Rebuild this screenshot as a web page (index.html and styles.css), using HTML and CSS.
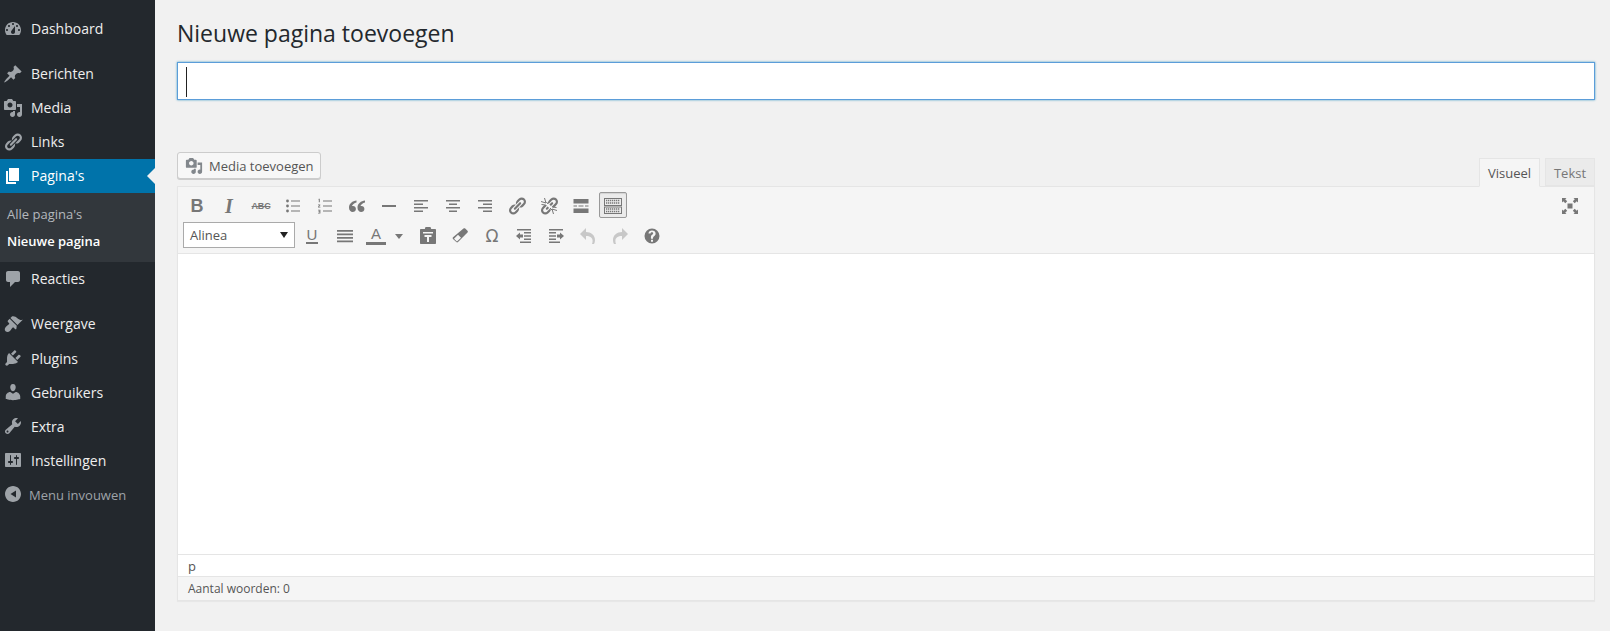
FILE: index.html
```html
<!DOCTYPE html>
<html lang="nl">
<head>
<meta charset="utf-8">
<title>Nieuwe pagina toevoegen</title>
<link rel="stylesheet" href="styles.css">
</head>
<body>
<svg class="defs" width="0" height="0" aria-hidden="true">
  <symbol id="i-dash" viewBox="0 0 20 20"><path fill-rule="evenodd" d="M3.76 16h12.48c1.1-1.37 1.76-3.11 1.76-5 0-4.42-3.58-8-8-8s-8 3.58-8 8c0 1.89.66 3.63 1.76 5zM10 4c.55 0 1 .45 1 1s-.45 1-1 1-1-.45-1-1 .45-1 1-1zM6 6c.55 0 1 .45 1 1s-.45 1-1 1-1-.45-1-1 .45-1 1-1zm8 0c.55 0 1 .45 1 1s-.45 1-1 1-1-.45-1-1 .45-1 1-1zm-5.37 5.55L12 7v6c0 1.1-.9 2-2 2s-2-.9-2-2c0-.57.24-1.08.63-1.45zM4 10c.55 0 1 .45 1 1s-.45 1-1 1-1-.45-1-1 .45-1 1-1zm12 0c.55 0 1 .45 1 1s-.45 1-1 1-1-.45-1-1 .45-1 1-1z"/></symbol>
  <symbol id="i-pin" viewBox="0 0 20 20"><path d="M10.44 3.02l1.82-1.82 6.36 6.35-1.83 1.82c-1.05-.68-2.48-.57-3.41.36l-.75.75c-.92.93-1.04 2.35-.35 3.41l-1.83 1.82-2.41-2.41-2.8 2.79c-.42.42-3.38 2.71-3.8 2.29s1.86-3.39 2.28-3.81l2.79-2.79L4.1 9.36l1.83-1.82c1.05.69 2.48.57 3.4-.36l.75-.75c.93-.92 1.05-2.35.36-3.41z"/></symbol>
  <symbol id="i-media" viewBox="0 0 20 20"><path fill-rule="evenodd" d="M13 11V4c0-.55-.45-1-1-1h-1.67L9 1H5L3.67 3H2c-.55 0-1 .45-1 1v7c0 .55.45 1 1 1h10c.55 0 1-.45 1-1zM7 4.5c1.38 0 2.5 1.12 2.5 2.5S8.38 9.5 7 9.5 4.5 8.38 4.5 7 5.62 4.5 7 4.5zM14 6h5v10.5c0 1.38-1.12 2.5-2.5 2.5S14 17.88 14 16.5s1.12-2.5 2.5-2.5c.17 0 .34.02.5.05V9h-3V6zm-4 8.05V13h2v3.5c0 1.38-1.12 2.5-2.5 2.5S7 17.88 7 16.5 8.12 14 9.5 14c.17 0 .34.02.5.05z"/></symbol>
  <symbol id="i-link" viewBox="0 0 20 20"><path d="M17.74 2.76c1.68 1.69 1.68 4.41 0 6.1l-1.53 1.52c-1.12 1.12-2.7 1.47-4.14 1.09l2.62-2.61.76-.77.76-.76c.84-.84.84-2.2 0-3.04-.84-.85-2.2-.85-3.04 0l-.77.76-3.38 3.38c-.37-1.44-.02-3.02 1.1-4.14l1.52-1.53c1.69-1.68 4.42-1.68 6.1 0zM8.59 13.43l5.34-5.34c.42-.42.42-1.1 0-1.52-.44-.43-1.13-.39-1.53 0l-5.33 5.34c-.42.42-.42 1.1 0 1.52.44.43 1.13.39 1.52 0zm-.76 2.29l4.14-4.15c.38 1.44.03 3.02-1.09 4.14l-1.52 1.53c-1.69 1.68-4.41 1.68-6.1 0-1.68-1.68-1.68-4.42 0-6.1l1.53-1.52c1.12-1.12 2.7-1.47 4.14-1.1l-4.14 4.15c-.85.84-.85 2.2 0 3.05.84.84 2.2.84 3.04 0z"/></symbol>
  <symbol id="i-page" viewBox="0 0 20 20"><path d="M6 15V2h10v13H6zm-1 1h8v2H3V5h2v11z"/></symbol>
  <symbol id="i-comment" viewBox="0 0 20 20"><path d="M5 2h10c1.1 0 2 .9 2 2v7c0 1.1-.9 2-2 2h-3l-5 5v-5H5c-1.1 0-2-.9-2-2V4c0-1.1.9-2 2-2z"/></symbol>
  <symbol id="i-brush" viewBox="0 0 20 20"><path d="M14.48 11.06L7.41 3.99l1.5-1.5c.5-.56 2.3-.47 3.51.32 1.21.8 1.43 1.28 2.91 2.1 1.18.64 2.45 1.26 4.45.85zm-.71.71L6.7 4.7 4.93 6.47c-.39.39-.39 1.02 0 1.41l1.06 1.06c.39.39.39 1.03 0 1.42-.6.6-1.43 1.11-2.21 1.69-.35.26-.7.53-1.01.84-1.04 1.04-1.5 3.1-.22 4.38 1.28 1.28 3.34.82 4.38-.22.31-.31.58-.66.84-1.01.58-.78 1.09-1.61 1.69-2.21.39-.39 1.03-.39 1.42 0l1.06 1.06c.39.39 1.02.39 1.41 0z"/></symbol>
  <symbol id="i-plug" viewBox="0 0 20 20"><path d="M13.11 4.36L9.87 7.6 8 5.73l3.24-3.24c.35-.34 1.05-.2 1.56.32.52.51.66 1.21.31 1.55zm-8 1.77l.91-1.12 9.01 9.01-1.19.84c-.71.71-2.63 1.16-3.82 1.16H6.14L4.9 17.26c-.59.59-1.54.59-2.12 0-.59-.58-.59-1.53 0-2.12l1.24-1.24v-3.88c0-1.13.4-3.19 1.09-3.89zm7.26 3.97l3.24-3.24c.34-.35 1.04-.21 1.55.31.52.51.66 1.21.31 1.55l-3.24 3.25z"/></symbol>
  <symbol id="i-user" viewBox="0 0 20 20"><path d="M10 9.25c-2.27 0-2.73-3.44-2.73-3.44C7 4.02 7.82 2 9.97 2c2.16 0 2.98 2.02 2.71 3.81 0 0-.41 3.44-2.68 3.44zm0 2.57L12.72 10c2.39 0 4.52 2.33 4.52 4.53v2.49s-3.65 1.13-7.24 1.13c-3.65 0-7.24-1.13-7.24-1.13v-2.49c0-2.25 1.94-4.48 4.47-4.48z"/></symbol>
  <symbol id="i-tool" viewBox="0 0 20 20"><path fill-rule="evenodd" d="M16.68 9.77c-1.34 1.34-3.3 1.67-4.95.99l-5.41 6.52c-.99.99-2.59.99-3.58 0s-.99-2.59 0-3.57l6.52-5.42c-.68-1.65-.35-3.61.99-4.95 1.28-1.28 3.12-1.62 4.72-1.06l-2.89 2.89 2.82 2.82 2.86-2.87c.53 1.58.18 3.39-1.08 4.65zM3.81 16.21c.4.39 1.04.39 1.43 0 .4-.4.4-1.04 0-1.43-.39-.4-1.03-.4-1.43 0-.39.39-.39 1.03 0 1.43z"/></symbol>
  <symbol id="i-settings" viewBox="0 0 20 20"><path fill-rule="evenodd" d="M18 16V4c0-.55-.45-1-1-1H3c-.55 0-1 .45-1 1v12c0 .55.45 1 1 1h14c.55 0 1-.45 1-1zM8 11h1c.55 0 1 .45 1 1s-.45 1-1 1H8v1.5c0 .28-.22.5-.5.5s-.5-.22-.5-.5V13H6c-.55 0-1-.45-1-1s.45-1 1-1h1V5.5c0-.28.22-.5.5-.5s.5.22.5.5V11zm5-2h-1c-.55 0-1-.45-1-1s.45-1 1-1h1V5.5c0-.28.22-.5.5-.5s.5.22.5.5V7h1c.55 0 1 .45 1 1s-.45 1-1 1h-1v5.5c0 .28-.22.5-.5.5s-.5-.22-.5-.5V9z"/></symbol>
  <symbol id="i-collapse" viewBox="0 0 20 20"><path fill-rule="evenodd" d="M18 10c0-4.42-3.58-8-8-8s-8 3.58-8 8 3.58 8 8 8 8-3.58 8-8zm-5 -3.5v7L7.5 10z"/></symbol>
</svg>

<div class="layout">
  <nav class="sidebar">
    <ul class="menu">
      <li class="item"><svg class="micon"><use href="#i-dash"/></svg><span>Dashboard</span></li>
      <li class="item sep"><svg class="micon"><use href="#i-pin"/></svg><span>Berichten</span></li>
      <li class="item"><svg class="micon"><use href="#i-media"/></svg><span>Media</span></li>
      <li class="item"><svg class="micon"><use href="#i-link"/></svg><span>Links</span></li>
      <li class="item active"><svg class="micon"><use href="#i-page"/></svg><span>Pagina's</span></li>
      <li class="sub">
        <div class="subitem">Alle pagina's</div>
        <div class="subitem current">Nieuwe pagina</div>
      </li>
      <li class="item"><svg class="micon"><use href="#i-comment"/></svg><span>Reacties</span></li>
      <li class="item sep"><svg class="micon"><use href="#i-brush"/></svg><span>Weergave</span></li>
      <li class="item low"><svg class="micon"><use href="#i-plug"/></svg><span>Plugins</span></li>
      <li class="item low"><svg class="micon"><use href="#i-user"/></svg><span>Gebruikers</span></li>
      <li class="item low"><svg class="micon"><use href="#i-tool"/></svg><span>Extra</span></li>
      <li class="item low"><svg class="micon"><use href="#i-settings"/></svg><span>Instellingen</span></li>
      <li class="item collapse"><svg class="micon"><use href="#i-collapse"/></svg><span>Menu invouwen</span></li>
    </ul>
  </nav>

  <main class="content">
    <h1 class="title">Nieuwe pagina toevoegen</h1>
    <div class="titlefield"><span class="caret"></span></div>

    <div class="editor-head">
      <button class="media-btn"><svg class="btn-icon"><use href="#i-media"/></svg>Media toevoegen</button>
      <div class="tabs">
        <div class="tab on">Visueel</div>
        <div class="tab">Tekst</div>
      </div>
    </div>

    <section class="editor">
      <div class="toolbar">
        <div class="row">
          <div class="tb glyph bold">B</div>
          <div class="tb glyph ital">I</div>
          <div class="tb glyph abc">ABC</div>
          <div class="tb"><svg class="ti" viewBox="0 0 20 20"><path d="M8 4.400h9v1.100H8zM8 9.400h9v1.100H8zM8 14.400h9v1.100H8z"/><circle cx="4.500" cy="5" r="1.400"/><circle cx="4.500" cy="10" r="1.400"/><circle cx="4.500" cy="15" r="1.400"/></svg></div>
          <div class="tb"><svg class="ti" viewBox="0 0 20 20"><path d="M8 4.400h9v1H8zM8 9.500h9v1H8zM8 14.600h9v1H8zM3.800 2.800h1v3.400h-1V3.600h-.6zM3 8.400h2.300v.9L4 10.700h1.400v.8H3v-.8l1.400-1.500H3zM3 13.800h2.400v3.600H3v-.7h1.400v-.8H3.500v-.6h.9v-.8H3z"/></svg></div>
          <div class="tb"><svg class="ti" viewBox="0 0 20 20"><path d="M9.500 4.500C5.600 5 2 7.400 2 11.800 2 14.400 3.700 16 5.700 16c1.700 0 3.200-1.300 3.200-3.100 0-1.700-1.200-3-2.900-3-.5 0-.9.100-1 .1.300-1.500 2.300-3 4.500-3.500zM18 4.500c-3.900.5-7.500 2.900-7.500 7.300 0 2.600 1.700 4.200 3.700 4.200 1.700 0 3.200-1.300 3.200-3.100 0-1.700-1.200-3-2.900-3-.5 0-.9.100-1 .1.300-1.500 2.300-3 4.500-3.500z"/></svg></div>
          <div class="tb"><svg class="ti" viewBox="0 0 20 20"><path d="M3 9h14v2H3z"/></svg></div>
          <div class="tb"><svg class="ti" viewBox="0 0 20 20"><path d="M3 4h14v1.500H3zM3 7.500h9V9H3zM3 11h14v1.500H3zM3 14.500h9V16H3z"/></svg></div>
          <div class="tb"><svg class="ti" viewBox="0 0 20 20"><path d="M3 4h14v1.500H3zM6 7.500h8V9H6zM3 11h14v1.500H3zM6 14.500h8V16H6z"/></svg></div>
          <div class="tb"><svg class="ti" viewBox="0 0 20 20"><path d="M3 4h14v1.500H3zM8 7.500h9V9H8zM3 11h14v1.500H3zM8 14.500h9V16H8z"/></svg></div>
          <div class="tb"><svg class="ti"><use href="#i-link"/></svg></div>
          <div class="tb"><svg class="ti" viewBox="0 0 20 20"><use href="#i-link" width="20" height="20"/><path class="gap" d="M3.500 3.500L16.500 16.500"/><path class="ray" d="M2 5.500L7 7M5.500 2L7 7M7.500 6L9 8M2.500 8.500L6.500 9M11 12L13 14M18 14.500L13 13M14.500 18L13 13M17.500 11.500L13.500 11"/></svg></div>
          <div class="tb"><svg class="ti" viewBox="0 0 20 20"><path d="M2.500 3h15v4.500h-15zM2.500 9.500h3.500v1h-3.500zM7.500 9.500h5v1h-5zM14 9.500h3.500v1H14zM2.500 12.500h15V17h-15z"/></svg></div>
          <div class="tb pressed"><svg class="ti" viewBox="0 0 20 20"><rect class="kb" x="1.500" y="2.500" width="17" height="7"/><rect class="kb" x="1.500" y="11" width="17" height="6.500"/><path class="keys" d="M3 4.500H17M3 7H17M3 13H17M3 15.500H17"/></svg></div>
          <div class="tb full"><svg class="ti" viewBox="0 0 20 20"><path d="M7.500 7.500h5v5h-5zM2 2h4.500L5.200 3.300 7.200 5.300 5.300 7.200 3.300 5.200 2 6.500zM18 2v4.500l-1.300-1.300-2 2-1.900-1.900 2-2L13.500 2zM2 18v-4.500l1.300 1.300 2-2 1.900 1.900-2 2L6.500 18zM18 18h-4.500l1.300-1.300-2-2 1.900-1.900 2 2 1.300-1.300z"/></svg></div>
        </div>
        <div class="row">
          <div class="select"><span>Alinea</span><i class="sel-arrow"></i></div>
          <div class="tb glyph under"><span>U</span></div>
          <div class="tb"><svg class="ti" viewBox="0 0 20 20"><path d="M2 4h16v1.700H2zM2 7.500h16v1.700H2zM2 11h16v1.700H2zM2 14.500h16v1.700H2z"/></svg></div>
          <div class="tb split"><span class="fore">A</span><i class="down"></i></div>
          <div class="tb"><svg class="ti" viewBox="0 0 20 20"><path fill-rule="evenodd" d="M7.500 1h5l.7 2H17c.6 0 1 .4 1 1v13c0 .6-.4 1-1 1H3c-.6 0-1-.4-1-1V4c0-.6.4-1 1-1h3.800zM5 6v1.500h10V6zm1.500 3v2H9v5h2v-5h2.500V9z"/></svg></div>
          <div class="tb"><svg class="ti" viewBox="0 0 20 20"><path fill-rule="evenodd" d="M13.500 2.500c.5-.5 1.200-.5 1.700 0l2.300 2.300c.5.500.5 1.200 0 1.700l-9.500 9.500c-.5.5-1.200.5-1.700 0l-3.300-3c-.5-.5-.5-1.200 0-1.700zM8 8.800l3 3-4.100 3.700L4 12.800z"/></svg></div>
          <div class="tb glyph omega">Ω</div>
          <div class="tb"><svg class="ti" viewBox="0 0 20 20"><path d="M3 3h14v1.500H3zM10 6h7v1.500h-7zM10 9.200h7v1.600h-7zM10 12.500h7V14h-7zM6 15.500h11V17H6zM6 6.500v2h3v3H6v2L2 10z"/></svg></div>
          <div class="tb"><svg class="ti" viewBox="0 0 20 20"><path d="M3 3h14v1.500H3zM3 6h7v1.500H3zM3 9.200h7v1.600H3zM3 12.500h7V14H3zM3 15.500h11V17H3zM14 6.500v2h-3v3h3v2l4-3.500z"/></svg></div>
          <div class="tb off"><svg class="ti" viewBox="0 0 20 20"><path d="M2 8l6-6v4c5 0 9 3 9 8 0 1.500-.4 3-1 4h-2c.4-1 .6-2 .6-3.200 0-2.800-2.600-4.800-6.600-4.800v4z"/></svg></div>
          <div class="tb off"><svg class="ti" viewBox="0 0 20 20"><path d="M18 8l-6-6v4C7 6 3 9 3 14c0 1.500.4 3 1 4h2c-.4-1-.6-2-.6-3.200 0-2.800 2.600-4.800 6.600-4.800v4z"/></svg></div>
          <div class="tb"><svg class="ti" viewBox="0 0 20 20"><path fill-rule="evenodd" d="M10 2.500a7.500 7.500 0 1 1 0 15 7.500 7.500 0 0 1 0-15zM9 13.800v2h2v-2zM10 4.500c-2 0-3.400 1.100-3.500 3h2c.1-.8.6-1.200 1.400-1.200.8 0 1.300.4 1.300 1 0 .5-.3.900-1 1.400C8.900 9.400 8.900 10.500 9 12.800h2c0-1.500.2-2 1-2.500 1-.7 1.600-1.500 1.600-2.800 0-1.800-1.500-3-3.600-3z"/></svg></div>
        </div>
      </div>
      <div class="editarea"></div>
      <div class="pathbar">p</div>
      <div class="statusbar">Aantal woorden: 0</div>
    </section>
  </main>
</div>
</body>
</html>
```

FILE: styles.css
```css
* { box-sizing: border-box; }
html, body { margin: 0; height: 631px; overflow: hidden; }
body { background: #f1f1f1; font-family: "Open Sans", sans-serif; font-size: 13px; color: #444; }
.defs { display: block; height: 0; }
.layout { display: flex; height: 631px; }

/* Sidebar */
.sidebar { width: 155px; flex: none; background: #23282d; padding-top: 12px; }
.menu { list-style: none; margin: 0; padding: 0; }
.item { position: relative; display: flex; align-items: center; height: 34px; padding-left: 3px; color: #eee; font-size: 14px; }
.item span { padding-bottom: 2px; }
.item.low span { padding-bottom: 0; }
.item.sep { margin-top: 11px; }
.micon { width: 20px; height: 20px; flex: none; margin-right: 8px; fill: #9ea3a8; }
.item.active { background: #0073aa; color: #fff; }
.item.active .micon { fill: #fff; }
.item.active::after { content: ""; position: absolute; right: 0; top: 9px; border: 8px solid transparent; border-right-color: #f1f1f1; border-left-width: 0; }
.sub { background: #32373c; height: 69px; padding: 8px 0 0 7px; font-size: 13px; }
.subitem { height: 27px; line-height: 27px; color: #b4b9be; }
.subitem.current { color: #fff; font-weight: 600; }
.item.collapse { color: #9ea3a8; font-size: 13px; }
.item.collapse span { padding: 2px 0 0; }
.item.collapse .micon { margin-right: 6px; }

/* Content */
.content { flex: 1; min-width: 0; padding: 0 15px 0 22px; }
.title { margin: 0; padding: 18px 0 0; height: 62px; font-size: 23px; line-height: 31px; font-weight: 400; color: #23282d; }
.titlefield { height: 38px; background: #fff; border: 1px solid #5b9dd9; box-shadow: 0 0 2px rgba(30,140,190,.8); padding: 4px 8px; }
.caret { display: block; width: 1px; height: 30px; background: #222; }

.editor-head { display: flex; justify-content: space-between; align-items: flex-end; margin-top: 52px; height: 35px; margin-bottom: -1px; position: relative; }
.media-btn { display: flex; align-items: center; align-self: flex-start; height: 27px; width: 144px; padding: 0 4px 0 7px; background: #f7f7f7; border: 1px solid #ccc; border-radius: 3px; box-shadow: 0 1px 0 #ccc; color: #555; font: 13px "Open Sans", sans-serif; white-space: nowrap; }
.btn-icon { width: 18px; height: 18px; fill: #82878c; margin-right: 6px; flex: none; }
.tabs { display: flex; gap: 5px; }
.tab { width: 50px; height: 28px; line-height: 29px; text-align: center; font-size: 13px; color: #777; background: #ebebeb; border: 1px solid #e5e5e5; }
.tab.on { width: 61px; height: 29px; background: #f5f5f5; color: #555; border-bottom-color: #f5f5f5; position: relative; z-index: 1; }

.editor { border: 1px solid #e5e5e5; background: #fff; box-shadow: 0 1px 1px rgba(0,0,0,.04); }
.toolbar { background: #f5f5f5; height: 67px; border-bottom: 1px solid #e5e5e5; padding: 5px 5px 0 3px; }
.row { display: flex; align-items: center; height: 26px; margin-bottom: 4px; }
.tb { flex: none; display: flex; align-items: center; justify-content: center; width: 28px; height: 26px; margin: 0 2px; padding-top: 2px; border: 1px solid transparent; border-radius: 2px; color: #777; }
.ti { width: 20px; height: 20px; fill: #777; }
.tb.pressed { background: #ebebeb; border-color: #999; box-shadow: inset 0 1px 1px rgba(0,0,0,.1); }
.tb.off .ti { fill: #c8c8c8; }
.tb.full { margin-left: auto; margin-right: 5px; }
.gap { fill: none; stroke: #f5f5f5; stroke-width: 2.500; }
.ray { fill: none; stroke: #777; stroke-width: 1; }
.kb { fill: none; stroke: #777; stroke-width: 1; }
.keys { fill: none; stroke: #777; stroke-width: 1.400; stroke-dasharray: 1.300 .700; }
.glyph { font-family: "Liberation Sans", sans-serif; }
.bold { font-size: 18px; font-weight: 700; }
.ital { font-family: "Liberation Serif", serif; font-size: 20px; font-weight: 700; font-style: italic; }
.abc { font-size: 9px; font-weight: 700; text-decoration: line-through; letter-spacing: -.2px; }
.under { margin-right: 3px; }
.under span { font-size: 15px; font-weight: 400; border-bottom: 2px solid #777; line-height: 14px; padding: 0 1px; }
.omega { font-family: "DejaVu Sans", sans-serif; font-size: 17px; font-weight: 400; }

.select { display: flex; align-items: center; justify-content: space-between; width: 112px; height: 26px; margin: 0 1px 0 2px; padding: 0 6px; background: #fff; border: 1px solid #aaa; color: #555; font-size: 13px; }
.sel-arrow { width: 0; height: 0; border: 4.500px solid transparent; border-top: 6px solid #222; border-bottom: 0; }
.tb.split { width: 47px; justify-content: flex-start; padding-left: 2px; }
.fore { width: 20px; text-align: center; font: 15px/14px "Liberation Sans", sans-serif; border-bottom: 3px solid #777; padding-bottom: 1px; margin-right: 9px; }
.down { width: 0; height: 0; border: 4px solid transparent; border-top: 5px solid #777; border-bottom: 0; }

.editarea { height: 301px; background: #fff; border-bottom: 1px solid #e5e5e5; }
.pathbar { height: 21px; padding: 0 10px; line-height: 23px; font-size: 13px; color: #555; background: #fff; overflow: hidden; }
.statusbar { height: 24px; padding: 0 10px; line-height: 24px; font-size: 12px; color: #555; background: #f5f5f5; border-top: 1px solid #e5e5e5; }
```
